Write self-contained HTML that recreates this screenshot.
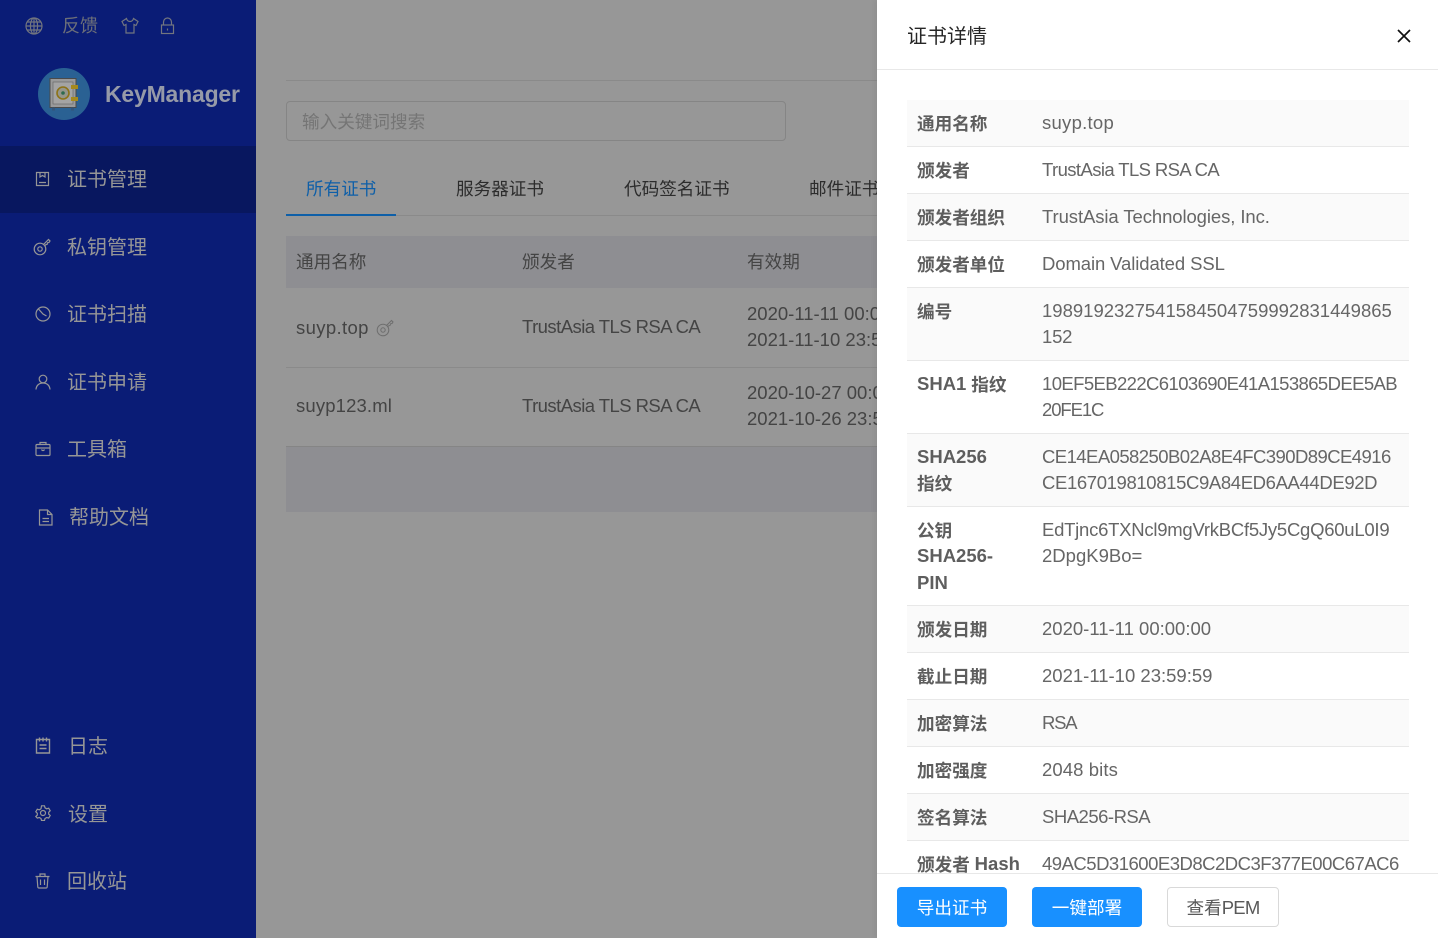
<!DOCTYPE html>
<html lang="zh-CN"><head><meta charset="utf-8"><title>证书详情</title>
<style>
*{box-sizing:border-box}
html,body{margin:0;padding:0;width:1438px;height:938px;overflow:hidden;background:#979797}
body{position:relative;font-family:"Liberation Sans","Noto Sans CJK SC",sans-serif;font-size:17.6px;color:#333}
.a{position:absolute;white-space:nowrap}
#side{position:absolute;left:0;top:0;width:256px;height:938px;background:#0a1c76}
#active{position:absolute;left:0;top:146px;width:256px;height:67px;background:#08175f}
.m{position:absolute;font-size:20px;line-height:28px;color:#969696;white-space:nowrap}
.ic{position:absolute;fill:none;stroke:#969696;stroke-width:1.2}
.line{position:absolute;background:#8a8a8a;height:1px}
.dk{color:#2c2c2c}
.g{color:#444}
.e{font-size:18.5px}
#panel{position:absolute;left:877px;top:0;width:561px;height:938px;background:#fff;box-shadow:-3px 0 5px rgba(0,0,0,.05)}
#body{position:absolute;left:0;top:70px;width:561px;height:803px;overflow:hidden}
.r{position:absolute;left:30px;width:502px;border-bottom:1px solid #e8e8e8;color:#666}
.r.o{background:#fafafa}
.l{position:absolute;left:10px;top:11px;width:115px;line-height:26.4px;font-weight:700;color:#5e5e5e;white-space:nowrap}
.l .e{position:relative;top:-1px}
.v{position:absolute;left:135px;top:10px;line-height:26.4px;white-space:nowrap;color:#666;font-size:18.5px}
.btn{position:absolute;top:887px;height:40px;border-radius:4px;text-align:center;line-height:42px;background:#1890ff;color:#fff}
</style></head><body>
<div id="side"></div><div id="active"></div>

<svg class="ic" style="left:25px;top:17px;stroke:#72757f" width="18" height="18" viewBox="0 0 18 18"><circle cx="9" cy="9" r="8"/><ellipse cx="9" cy="9" rx="3.6" ry="8"/><path d="M1 9h16M2 5h14M2 13h14M9 1v16"/></svg>
<div class="a" style="left:62px;top:13px;font-size:18px;line-height:26px;color:#6c6f79">反馈</div>
<svg class="ic" style="left:121px;top:17px;stroke:#72757f" width="18" height="18" viewBox="0 0 18 18"><path d="M5.5 1.5 1 4.5l2 4 2-1V16h8V7.500l2 1 2-4-4.500-3c-.5 2-1.500 3-3.500 3s-3-1-3.500-3z"/></svg>
<svg class="ic" style="left:160px;top:17px;stroke:#72757f" width="15" height="18" viewBox="0 0 15 18"><rect x="1.500" y="8" width="12" height="8.500"/><path d="M3.500 8V5a4 4 0 0 1 8 0v3M7.500 11.500v2"/></svg>

<svg class="a" style="left:38px;top:68px" width="52" height="52" viewBox="0 0 52 52"><circle cx="26" cy="26" r="26" fill="#2a6193"/><rect x="12" y="10.500" width="26" height="29" fill="#9a9a9a" stroke="#4a4a4a"/><rect x="15" y="14" width="20" height="22" fill="#a4a4a4" stroke="#6a6a6a" stroke-width=".7"/><circle cx="25" cy="25" r="6" fill="#96968a" stroke="#8d7317" stroke-width="1.600"/><circle cx="25" cy="25" r="1.800" fill="#2e6a4e"/><rect x="33" y="17" width="7" height="4" fill="#a58a1e"/><rect x="33" y="29" width="7" height="4" fill="#a58a1e"/><rect x="14" y="39.500" width="3" height="3" fill="#33557a"/><rect x="33" y="39.500" width="3" height="3" fill="#33557a"/></svg>
<div class="a" style="left:105px;top:79px;font-size:23px;line-height:30px;font-weight:700;letter-spacing:-.2px;color:#969aa8">KeyManager</div>

<svg class="ic" style="left:35px;top:171px" width="16" height="16" viewBox="0 0 16 16"><path d="M1.500 1.500h12v13h-12zM4 11.500h7M5 1.500v4.500l2.500-1.500L10 6V1.500"/></svg>
<div class="m" style="left:67px;top:166px">证书管理</div>
<svg class="ic" style="left:33px;top:238px" width="18" height="18" viewBox="0 0 18 18"><circle cx="7" cy="11" r="5.800"/><circle cx="7" cy="11" r="2.200"/><path d="M10.500 6.500 15.500 1.500l1.500 1.500-1 1.500-1.500.3-.3 1.500-1.500.5-1 1"/></svg>
<div class="m" style="left:67px;top:234px">私钥管理</div>
<svg class="ic" style="left:35px;top:306px" width="16" height="16" viewBox="0 0 16 16"><circle cx="8" cy="8" r="7"/><path d="M3.500 3 8 8l3.500 2"/></svg>
<div class="m" style="left:67px;top:301px">证书扫描</div>
<svg class="ic" style="left:35px;top:374px" width="16" height="16" viewBox="0 0 16 16"><circle cx="8" cy="5" r="3.800"/><path d="M1 15.500c.3-4 3-6.500 7-6.500s6.700 2.500 7 6.500"/></svg>
<div class="m" style="left:67px;top:369px">证书申请</div>
<svg class="ic" style="left:35px;top:441px" width="16" height="16" viewBox="0 0 16 16"><rect x="1" y="3.500" width="14" height="11" rx="1"/><path d="M5 3.500V1.500h6v2M1 7h14M6.500 8.500c.5 1.300 2.500 1.300 3 0"/></svg>
<div class="m" style="left:67px;top:436px">工具箱</div>
<svg class="ic" style="left:38px;top:509px" width="15" height="17" viewBox="0 0 15 17"><path d="M1.500 1h8l4.500 4.500V16H1.500zM9.500 1v4.500H14M4.500 9.500h6.500M4.500 12.500h6.500"/></svg>
<div class="m" style="left:69px;top:504px">帮助文档</div>
<svg class="ic" style="left:35px;top:737px;stroke-width:1.4" width="16" height="17" viewBox="0 0 16 17"><path d="M1.500 2.500h13v13.500h-13zM4.500 .5v4M8 .5v4M11.500 .5v4M4.500 8h7M4.500 11.500h7"/></svg>
<div class="m" style="left:68px;top:733px">日志</div>
<svg class="ic" style="left:35px;top:805px" width="16" height="16" viewBox="0 0 16 16"><circle cx="8" cy="8" r="2.500"/><path d="M6.500.8h3l.5 2 1.700 1 2-.6 1.500 2.600-1.500 1.400v1.900l1.500 1.400-1.500 2.600-2-.6-1.700 1-.5 2h-3l-.5-2-1.700-1-2 .6L.8 11.500l1.500-1.400V8.200L.8 6.800l1.500-2.600 2 .6 1.700-1z"/></svg>
<div class="m" style="left:68px;top:801px">设置</div>
<svg class="ic" style="left:35px;top:873px" width="15" height="16" viewBox="0 0 15 16"><path d="M.5 3.500h14M5 3.500V1h5v2.500M2 3.500l.8 10.500q.1 1 1.200 1h7q1.100 0 1.200-1L13 3.500M5.500 6.500v5.500M9.500 6.500v5.500"/></svg>
<div class="m" style="left:67px;top:868px">回收站</div>

<div class="line" style="left:286px;top:80px;width:591px"></div>
<div class="a" style="left:286px;top:101px;width:500px;height:40px;border:1px solid #858585;border-radius:4px"></div>
<div class="a" style="left:302px;top:109px;line-height:26px;color:#757575">输入关键词搜索</div>

<div class="line" style="left:286px;top:215px;width:591px"></div>
<div class="a" style="left:286px;top:214px;width:110px;height:2px;background:#0e5fa8"></div>
<div class="a" style="left:306px;top:176px;line-height:26px;color:#0e5fa8">所有证书</div>
<div class="a dk" style="left:456px;top:176px;line-height:26px">服务器证书</div>
<div class="a dk" style="left:624px;top:176px;line-height:26px">代码签名证书</div>
<div class="a dk" style="left:809px;top:176px;line-height:26px;width:68px;overflow:hidden">邮件证书</div>

<div class="a" style="left:286px;top:236px;width:591px;height:52px;background:#8e8e92"></div>
<div class="a g" style="left:296px;top:249px;line-height:26px">通用名称</div>
<div class="a g" style="left:522px;top:249px;line-height:26px">颁发者</div>
<div class="a g" style="left:747px;top:249px;line-height:26px">有效期</div>

<div class="a g e" style="left:296px;top:315px;line-height:26px;letter-spacing:.35px">suyp.top</div>
<svg class="a" style="left:376px;top:319px;fill:none;stroke:#6e6e6e;stroke-width:1" width="18" height="18" viewBox="0 0 18 18"><circle cx="7" cy="11" r="5.800"/><circle cx="7" cy="11" r="2.200"/><path d="M10.500 6.500 15.500 1.500l1.500 1.500-1 1.500-1.500.3-.3 1.500-1.500.5-1 1"/></svg>
<div class="a g e" style="left:522px;top:314px;line-height:26px;letter-spacing:-.55px">TrustAsia TLS RSA CA</div>
<div class="a g e" style="left:747px;top:301px;width:130px;overflow:hidden;line-height:26.400px">2020-11-11 00:00:00<br>2021-11-10 23:59:59</div>
<div class="line" style="left:286px;top:367px;width:591px"></div>
<div class="a g e" style="left:296px;top:393px;line-height:26px;letter-spacing:.14px">suyp123.ml</div>
<div class="a g e" style="left:522px;top:393px;line-height:26px;letter-spacing:-.55px">TrustAsia TLS RSA CA</div>
<div class="a g e" style="left:747px;top:380px;width:130px;overflow:hidden;line-height:26.400px">2020-10-27 00:00:00<br>2021-10-26 23:59:59</div>
<div class="a" style="left:286px;top:446px;width:591px;height:66px;background:#8e8e92;border-top:1px solid #858585"></div>

<div id="panel">
  <div class="a" style="left:30px;top:23px;font-size:20px;line-height:28px;color:#262626">证书详情</div>
  <svg class="a" style="left:520px;top:29px" width="14" height="14" viewBox="0 0 14 14"><path d="M1 1l12 12M13 1 1 13" stroke="#111" stroke-width="1.700" fill="none"/></svg>
  <div class="a" style="left:0;top:69px;width:561px;height:1px;background:#e8e8e8"></div>
  <div id="body">
    <div class="r o" style="top:30px;height:47px"><div class="l">通用名称</div><div class="v" style="letter-spacing:.26px">suyp.top</div></div>
    <div class="r" style="top:77px;height:47px"><div class="l">颁发者</div><div class="v" style="letter-spacing:-.6px">TrustAsia TLS RSA CA</div></div>
    <div class="r o" style="top:124px;height:47px"><div class="l">颁发者组织</div><div class="v" style="letter-spacing:-.09px">TrustAsia Technologies, Inc.</div></div>
    <div class="r" style="top:171px;height:47px"><div class="l">颁发者单位</div><div class="v" style="letter-spacing:-.1px">Domain Validated SSL</div></div>
    <div class="r o" style="top:218px;height:73px"><div class="l">编号</div><div class="v">1989192327541584504759992831449865<br><span style="letter-spacing:-.2px">152</span></div></div>
    <div class="r" style="top:291px;height:73px"><div class="l"><span class="e">SHA1</span> 指纹</div><div class="v"><span style="letter-spacing:-.6px">10EF5EB222C6103690E41A153865DEE5AB</span><br><span style="letter-spacing:-1.1px">20FE1C</span></div></div>
    <div class="r o" style="top:364px;height:73px"><div class="l"><span class="e">SHA256</span><br>指纹</div><div class="v"><span style="letter-spacing:-.56px">CE14EA058250B02A8E4FC390D89CE4916</span><br><span style="letter-spacing:-.37px">CE167019810815C9A84ED6AA44DE92D</span></div></div>
    <div class="r" style="top:437px;height:99px"><div class="l">公钥<br><span class="e">SHA256-</span><br><span class="e">PIN</span></div><div class="v"><span style="letter-spacing:-.25px">EdTjnc6TXNcl9mgVrkBCf5Jy5CgQ60uL0I9</span><br>2DpgK9Bo=</div></div>
    <div class="r o" style="top:536px;height:47px"><div class="l">颁发日期</div><div class="v">2020-11-11 00:00:00</div></div>
    <div class="r" style="top:583px;height:47px"><div class="l">截止日期</div><div class="v">2021-11-10 23:59:59</div></div>
    <div class="r o" style="top:630px;height:47px"><div class="l">加密算法</div><div class="v" style="letter-spacing:-1.2px">RSA</div></div>
    <div class="r" style="top:677px;height:47px"><div class="l">加密强度</div><div class="v" style="letter-spacing:.1px">2048 bits</div></div>
    <div class="r o" style="top:724px;height:47px"><div class="l">签名算法</div><div class="v" style="letter-spacing:-.5px">SHA256-RSA</div></div>
    <div class="r" style="top:771px;height:47px"><div class="l">颁发者 <span class="e">Hash</span></div><div class="v" style="letter-spacing:-.5px">49AC5D31600E3D8C2DC3F377E00C67AC6</div></div>
  </div>
  <div class="a" style="left:0;top:873px;width:561px;height:1px;background:#e8e8e8"></div>
  <div class="btn" style="left:20px;width:110px">导出证书</div>
  <div class="btn" style="left:155px;width:110px">一键部署</div>
  <div class="btn" style="left:290px;width:112px;background:#fff;border:1px solid #d9d9d9;color:#595959;line-height:40px">查看<span class="e" style="letter-spacing:-.8px">PEM</span></div>
</div>
</body></html>
